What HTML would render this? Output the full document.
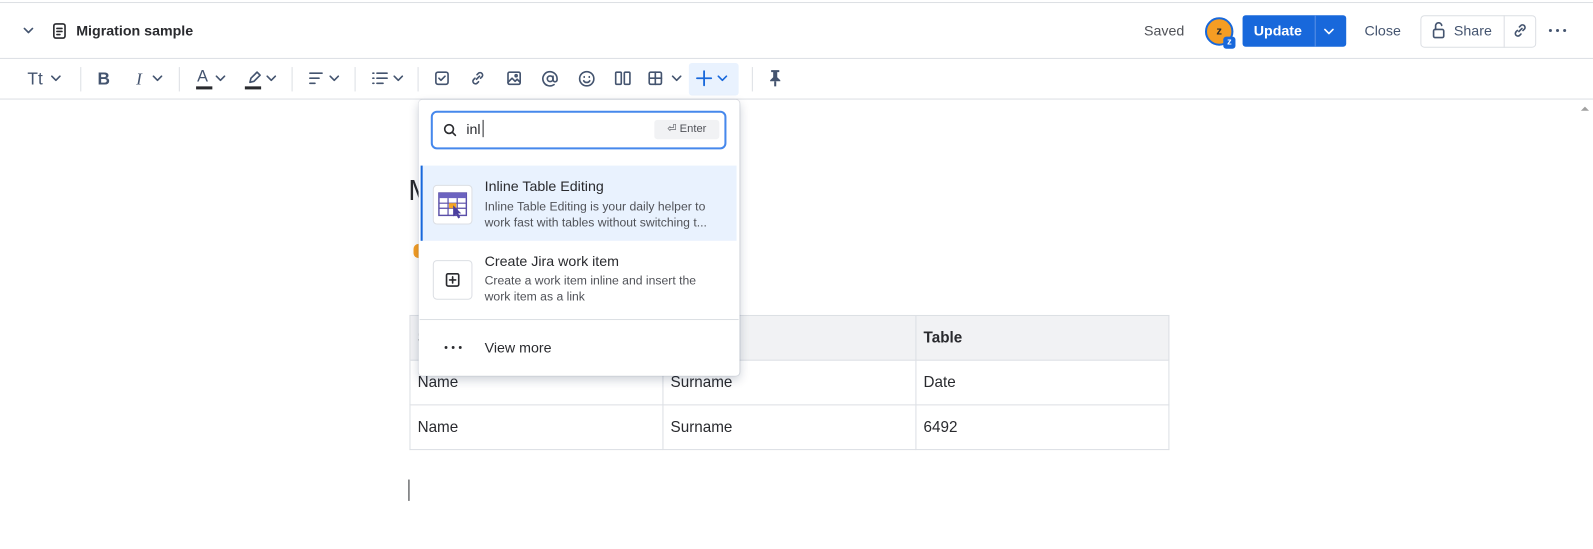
<!DOCTYPE html>
<html><head><meta charset="utf-8"><style>
*{box-sizing:border-box;margin:0;padding:0}
body{width:1593px;height:548px;background:#fff;font-family:"Liberation Sans",sans-serif;color:#292a2e;position:relative;overflow:hidden}
#w{position:absolute;left:0;top:0;width:1568px;height:540px;transform:scale(1.016);transform-origin:0 0}
.abs{position:absolute}
.ic{position:absolute;stroke:#44546f;fill:none;stroke-width:1.6;stroke-linecap:round;stroke-linejoin:round}
.sep{position:absolute;top:66px;width:1px;height:24px;background:#dcdfe4}
td{border:1px solid #dcdfe4;height:44px;padding:0 7px;font-size:15px;width:249px}
</style></head><body><div id="w">
<div class="abs" style="left:0;top:2px;width:1593px;height:1px;background:#dcdfe4"></div>
<div class="abs" style="left:0;top:57px;width:1593px;height:1px;background:#dcdfe4"></div>
<div class="abs" style="left:0;top:97px;width:1593px;height:1px;background:#dcdfe4"></div>
<svg class="ic" style="left:22px;top:26px" width="12" height="8"><path d="M2 2l4 4 4-4"/></svg>
<svg class="ic" style="left:51px;top:22px;stroke:#292a2e" width="16" height="17"><rect x="2" y="1.5" width="11" height="14" rx="2"/><path d="M5 6h5M5 9h5M5 12h3"/></svg>
<div class="abs" style="left:75px;top:22px;font-size:14px;font-weight:bold">Migration sample</div>
<div class="abs" style="left:1126px;top:22px;font-size:14px;color:#505258">Saved</div>
<div class="abs" style="left:1186px;top:17px;width:28px;height:28px;border-radius:50%;background:#f59d23;border:2px solid #1868db;font-size:11px;font-weight:bold;text-align:center;line-height:24px">z</div>
<div class="abs" style="left:1204px;top:36px;width:12px;height:12px;border-radius:3px;background:#1868db;color:#fff;font-size:9px;font-weight:bold;text-align:center;line-height:11px">z</div>
<div class="abs" style="left:1223px;top:15px;width:102px;height:31px;background:#1868db;border-radius:3px"></div>
<div class="abs" style="left:1234px;top:22px;font-size:14px;font-weight:bold;color:#fff">Update</div>
<div class="abs" style="left:1294px;top:15px;width:1px;height:31px;background:#5a90e6"></div>
<svg class="ic" style="left:1302px;top:27px;stroke:#fff" width="12" height="8"><path d="M2 2l4 4 4-4"/></svg>
<div class="abs" style="left:1343px;top:22px;font-size:14px;color:#44546f">Close</div>
<div class="abs" style="left:1398px;top:15px;width:114px;height:32px;border:1px solid #dcdfe4;border-radius:4px"></div>
<div class="abs" style="left:1480px;top:15px;width:1px;height:32px;background:#dcdfe4"></div>
<svg class="ic" style="left:1409px;top:21px" width="14" height="18"><rect x="2" y="8" width="10" height="8" rx="1.5"/><path d="M4 8V5a3 3 0 0 1 6-1"/></svg>
<div class="abs" style="left:1431px;top:22px;font-size:14px;color:#44546f">Share</div>
<svg class="ic" style="left:1488px;top:22px" width="16" height="16"><path d="M7 9l3-3M5.5 8L4 9.5a2.5 2.5 0 0 0 3.5 3.5L9 11.5M11 8l1.5-1.5A2.5 2.5 0 0 0 9 3L7.5 4.5"/></svg>
<svg class="abs" style="left:1524px;top:28px" width="18" height="4"><circle cx="2" cy="2" r="1.5" fill="#44546f"/><circle cx="9" cy="2" r="1.5" fill="#44546f"/><circle cx="16" cy="2" r="1.5" fill="#44546f"/></svg>

<div class="abs" style="left:27px;top:68px;font-size:17px;color:#44546f">Tt</div>
<svg class="ic" style="left:49px;top:73px" width="12" height="8"><path d="M2 2l4 4 4-4"/></svg>
<div class="sep" style="left:79px"></div>
<div class="abs" style="left:96px;top:68px;font-size:17px;font-weight:bold;color:#44546f">B</div>
<div class="abs" style="left:134px;top:68px;font-size:17px;font-style:italic;color:#44546f;font-family:'Liberation Serif'">I</div>
<svg class="ic" style="left:149px;top:73px" width="12" height="8"><path d="M2 2l4 4 4-4"/></svg>
<div class="sep" style="left:176px"></div>
<div class="abs" style="left:194px;top:67px;font-size:16px;color:#44546f">A</div>
<div class="abs" style="left:193px;top:85px;width:16px;height:3px;background:#292a2e"></div>
<svg class="ic" style="left:211px;top:73px" width="12" height="8"><path d="M2 2l4 4 4-4"/></svg>
<svg class="ic" style="left:242px;top:68px" width="16" height="16"><path d="M4 13l1-4 6-6 3 3-6 6z"/></svg>
<div class="abs" style="left:241px;top:85px;width:16px;height:3px;background:#292a2e"></div>
<svg class="ic" style="left:261px;top:73px" width="12" height="8"><path d="M2 2l4 4 4-4"/></svg>
<div class="sep" style="left:287px"></div>
<svg class="ic" style="left:303px;top:70px" width="16" height="14"><path d="M2 2h12M2 7h9M2 12h5"/></svg>
<svg class="ic" style="left:323px;top:73px" width="12" height="8"><path d="M2 2l4 4 4-4"/></svg>
<div class="sep" style="left:349px"></div>
<svg class="ic" style="left:365px;top:70px" width="18" height="14"><path d="M2 2h1M2 7h1M2 12h1M6 2h10M6 7h10M6 12h6"/></svg>
<svg class="ic" style="left:386px;top:73px" width="12" height="8"><path d="M2 2l4 4 4-4"/></svg>
<div class="sep" style="left:411px"></div>
<svg class="ic" style="left:427px;top:69px" width="16" height="16"><rect x="2" y="2" width="12" height="12" rx="2"/><path d="M5 8l2 2 4-4"/></svg>
<svg class="ic" style="left:462px;top:69px" width="16" height="16"><path d="M7 9l3-3M5.5 8L4 9.5a2.5 2.5 0 0 0 3.5 3.5L9 11.5M11 8l1.5-1.5A2.5 2.5 0 0 0 9 3L7.5 4.5"/></svg>
<svg class="ic" style="left:498px;top:69px" width="16" height="16"><rect x="2" y="2" width="12" height="12" rx="1.5"/><path d="M2 12l4-4 3 3 2-2 3 3"/><circle cx="10" cy="5.5" r="1"/></svg>
<svg class="ic" style="left:533px;top:69px" width="17" height="17"><circle cx="8.5" cy="8.5" r="2.8"/><path d="M11.3 6v3.5a2 2 0 0 0 4 0V8.5a7 7 0 1 0-3 5.8"/></svg>
<svg class="ic" style="left:569px;top:69px" width="17" height="17"><circle cx="8.5" cy="8.5" r="7"/><path d="M6 6.5v.5M11 6.5v.5M5.5 10.5a3.5 3.5 0 0 0 6 0"/></svg>
<svg class="ic" style="left:604px;top:69px" width="18" height="16"><rect x="2" y="2" width="5.5" height="12" rx="1"/><rect x="10.5" y="2" width="5.5" height="12" rx="1"/></svg>
<svg class="ic" style="left:637px;top:69px" width="16" height="16"><rect x="2" y="2" width="12" height="12" rx="1.5"/><path d="M8 2v12M2 8h12"/></svg>
<svg class="ic" style="left:660px;top:73px" width="12" height="8"><path d="M2 2l4 4 4-4"/></svg>
<div class="abs" style="left:678px;top:62px;width:49px;height:32px;background:#e9f2fe;border-radius:3px"></div>
<svg class="ic" style="left:684px;top:68px;stroke:#1868db;stroke-width:1.8" width="18" height="18"><path d="M9 2v14M2 9h14"/></svg>
<svg class="ic" style="left:705px;top:73px;stroke:#1868db" width="12" height="8"><path d="M2 2l4 4 4-4"/></svg>
<div class="sep" style="left:740px"></div>
<svg class="abs" style="left:756px;top:68px" width="14" height="18"><path d="M3 1h8v2H9v5l3 3v1H2v-1l3-3V3H3z" fill="#44546f"/><rect x="6" y="12" width="2" height="5" fill="#44546f"/></svg>

<div class="abs" style="left:402px;top:172px;font-size:28px">M</div>
<div class="abs" style="left:407px;top:240px;width:10px;height:14px;border-radius:7px;background:#f59d23"></div>
<table class="abs" style="left:403px;top:310px;border-collapse:collapse;width:748px">
<tr style="background:#f1f2f4"><td style="font-weight:bold;height:43px">S</td><td style="font-weight:bold">Column</td><td style="font-weight:bold">Table</td></tr>
<tr><td>Name</td><td>Surname</td><td>Date</td></tr>
<tr><td>Name</td><td>Surname</td><td>6492</td></tr>
</table>
<div class="abs" style="left:402px;top:472px;width:1px;height:21px;background:#292a2e"></div>
<svg class="abs" style="left:1555px;top:103px" width="10" height="8"><path d="M1 6l4-4 4 4z" fill="#a0a0a0"/></svg>

<div class="abs" style="left:412px;top:98px;width:316px;height:272px;background:#fff;border-radius:4px;box-shadow:0 4px 10px rgba(9,30,66,.2),0 0 1px rgba(9,30,66,.3)"></div>
<div class="abs" style="left:424px;top:109px;width:291px;height:38px;border:2px solid #4688ec;border-radius:6px"></div>
<svg class="ic" style="left:436px;top:121px;stroke:#292a2e" width="14" height="14"><circle cx="6" cy="6" r="4.3"/><path d="M9.2 9.2l3 3"/></svg>
<div class="abs" style="left:459px;top:119px;font-size:14px">inl</div>
<div class="abs" style="left:475px;top:118px;width:1px;height:17px;background:#292a2e"></div>
<div class="abs" style="left:644px;top:118px;width:64px;height:19px;background:#f1f2f4;border-radius:3px;font-size:11px;color:#505258;text-align:center;line-height:19px">⏎ Enter</div>
<div class="abs" style="left:414px;top:163px;width:311px;height:74px;background:#e9f2fe;border-left:2px solid #1868db"></div>
<div class="abs" style="left:426px;top:182px;width:39px;height:39px;border:1px solid #dcdfe4;border-radius:4px;background:#fff"></div>
<svg class="abs" style="left:431px;top:189px" width="30" height="28"><rect x="1" y="1" width="27" height="22" fill="#fff" stroke="#5a4fa8" stroke-width="1.4"/><rect x="1" y="1" width="27" height="5" fill="#6c63c0"/><path d="M1 11h27M1 16h27M10 6v17M19 6v17" stroke="#5a4fa8" stroke-width="1.2"/><rect x="11" y="11" width="7" height="5" fill="#f5a623"/><path d="M15 13l8 8-3 0 2 4-2 1-2-4-3 2z" fill="#4b3f9e"/></svg>
<div class="abs" style="left:477px;top:175px;font-size:14px">Inline Table Editing</div>
<div class="abs" style="left:477px;top:195px;font-size:12px;color:#505258;line-height:16px;width:240px">Inline Table Editing is your daily helper to work fast with tables without switching t...</div>
<div class="abs" style="left:426px;top:256px;width:39px;height:39px;border:1px solid #dcdfe4;border-radius:4px"></div>
<svg class="ic" style="left:438px;top:268px;stroke:#292a2e" width="16" height="16"><rect x="1.5" y="1.5" width="12" height="12" rx="1.5"/><path d="M7.5 4.5v6M4.5 7.5h6"/></svg>
<div class="abs" style="left:477px;top:249px;font-size:14px">Create Jira work item</div>
<div class="abs" style="left:477px;top:268px;font-size:12px;color:#505258;line-height:16px;width:225px">Create a work item inline and insert the work item as a link</div>
<div class="abs" style="left:413px;top:314px;width:314px;height:1px;background:#dcdfe4"></div>
<svg class="abs" style="left:437px;top:340px" width="18" height="4"><circle cx="2" cy="2" r="1.4" fill="#292a2e"/><circle cx="9" cy="2" r="1.4" fill="#292a2e"/><circle cx="16" cy="2" r="1.4" fill="#292a2e"/></svg>
<div class="abs" style="left:477px;top:334px;font-size:14px">View more</div>
</div></body></html>
